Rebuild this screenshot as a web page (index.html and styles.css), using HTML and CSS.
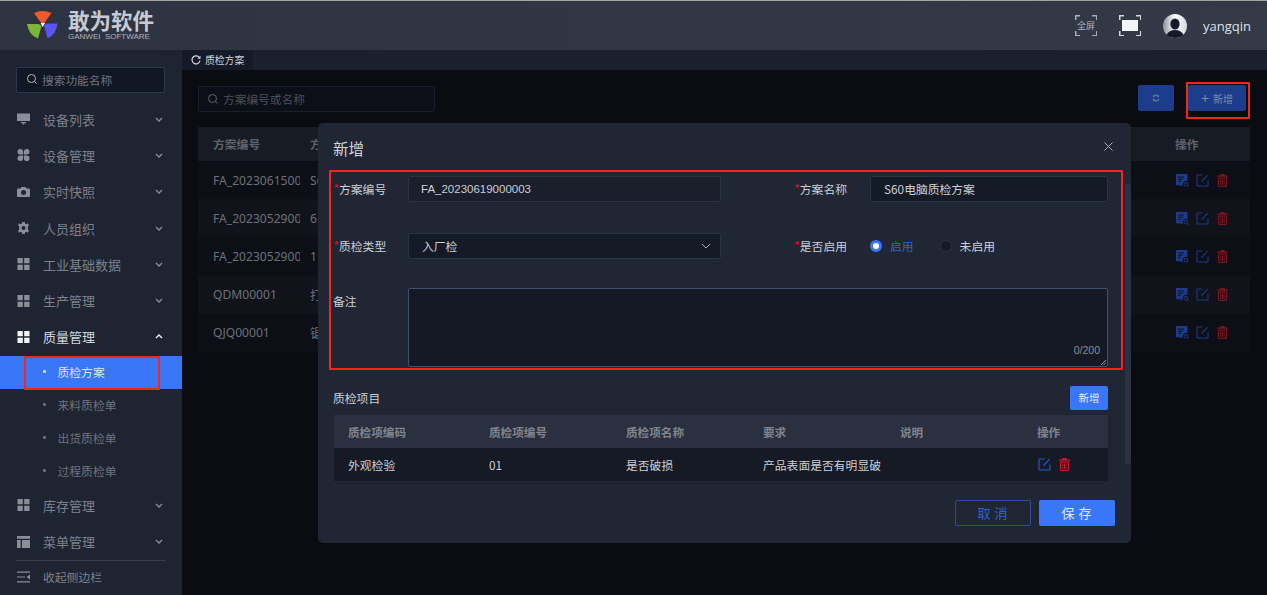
FILE: index.html
```html
<!DOCTYPE html>
<html lang="zh-CN">
<head>
<meta charset="utf-8">
<title>质检方案</title>
<link rel="stylesheet" href="styles.css">
</head>
<body>
<svg class="defs" width="0" height="0" aria-hidden="true">
  <symbol id="i-search" viewBox="0 0 12 12"><circle cx="5.5" cy="5.5" r="4" fill="none" stroke="currentColor" stroke-width="1"/><path d="M8.5 8.5L10.5 10.5" stroke="currentColor" stroke-width="1" fill="none"/></symbol>
  <symbol id="i-monitor" viewBox="0 0 13 12"><path d="M0 0.5H13V8H0Z M4 9H9V10.2H7.2V11.5H5.8V10.2H4Z" fill="currentColor"/></symbol>
  <symbol id="i-petal" viewBox="0 0 12 12"><path d="M0 3a2.8 2.8 0 0 1 5.6-.4V5.6H2.8A2.8 2.8 0 0 1 0 3ZM6.400 2.600A2.800 2.800 0 1 1 9.200 5.600H6.400ZM0 9a2.800 2.800 0 0 1 2.800-2.600H5.600V9.200A2.800 2.800 0 0 1 0 9ZM6.400 6.400H9.200A2.800 2.800 0 1 1 6.400 9.200Z" fill="currentColor"/></symbol>
  <symbol id="i-camera" viewBox="0 0 13 12"><path fill-rule="evenodd" d="M1 2.5H3.5L4.5 1H8.5L9.5 2.5H12Q13 2.5 13 3.5V10Q13 11 12 11H1Q0 11 0 10V3.5Q0 2.5 1 2.5ZM6.5 4A2.5 2.5 0 1 0 6.5 9A2.5 2.5 0 1 0 6.5 4Z" fill="currentColor"/></symbol>
  <symbol id="i-gear" viewBox="0 0 12 12"><path fill-rule="evenodd" d="M4.8 0H7.2L7.5 1.6 8.9 2.2 10.3 1.3 11.5 3.3 10.3 4.5V7.5L11.5 8.7 10.3 10.7 8.9 9.8 7.5 10.4 7.2 12H4.8L4.5 10.4 3.1 9.8 1.7 10.7.5 8.7 1.7 7.5V4.5L.5 3.3 1.7 1.3 3.1 2.2 4.5 1.6ZM6 4A2 2 0 1 0 6 8 2 2 0 1 0 6 4Z" fill="currentColor"/></symbol>
  <symbol id="i-grid" viewBox="0 0 12 12"><path d="M0 0H5.3V5.3H0ZM6.7 0H12V5.3H6.7ZM0 6.7H5.3V12H0ZM6.7 6.7H12V12H6.7Z" fill="currentColor"/></symbol>
  <symbol id="i-table" viewBox="0 0 12 11"><path d="M0 0H12V2.4H0ZM0 3.6H3.4V11H0ZM4.6 3.6H12V11H4.6Z" fill="currentColor"/></symbol>
  <symbol id="i-collapse" viewBox="0 0 13 11"><path d="M0 0H13V1.2H0ZM0 4.9H8V6.1H0ZM0 9.8H13V11H0ZM13 3V8L9.5 5.5Z" fill="currentColor"/></symbol>
  <symbol id="i-down" viewBox="0 0 8 5"><path d="M1 1L4 4 7 1" fill="none" stroke="currentColor" stroke-width="1.3"/></symbol>
  <symbol id="i-doc" viewBox="0 0 13 13"><path d="M0 0H11.500V7A3.500 3.500 0 0 0 7 11.800H4L2.800 10.800 1.400 11.800 0 10.800Z" fill="currentColor"/><path d="M2 3H8M2 5.200H7M2 7.400H5" stroke="#0a0d14" stroke-width=".9" fill="none"/><circle cx="10" cy="10.200" r="1.800" fill="none" stroke="currentColor" stroke-width="1"/><path d="M11.200 11.500L12.700 12.900" stroke="currentColor" stroke-width="1"/></symbol>
  <symbol id="i-edit" viewBox="0 0 13 13"><path d="M6.5 1H1.8Q1 1 1 1.8V11.2Q1 12 1.8 12H11.2Q12 12 12 11.2V6.5" fill="none" stroke="currentColor" stroke-width="1.1"/><path d="M5.5 7.5L11.8 1.2" stroke="currentColor" stroke-width="1.1" fill="none"/></symbol>
  <symbol id="i-trash" viewBox="0 0 12 13"><path fill-rule="evenodd" d="M4 0H8L8.6 1.4H11.6V2.8H.4V1.4H3.4ZM1.4 3.6H10.6V11.6Q10.6 13 9.2 13H2.8Q1.4 13 1.4 11.6ZM2.6 4.8V11.8H9.4V4.8ZM3.9 5.6H4.9V11H3.9ZM5.5 5.6H6.5V11H5.5ZM7.1 5.6H8.1V11H7.1Z" fill="currentColor"/></symbol>
</svg>

<div class="app">
  <header class="topbar">
    <div class="brand">
      <svg class="brand-mark" viewBox="0 0 32 30" width="32" height="30"><path d="M7 3Q15.500 -1 24.500 3L17 13.500H14.500Z" fill="#f0592b"/><path d="M0 13.500H11.800L14.500 15.500 11 28Q2 25 0 13.500Z" fill="#7cb53a" transform="translate(0 .5)"/><path d="M30.500 13.500H19.500L17 15.500 20.500 28.500Q29 25 30.500 13.500Z" fill="#5a55ee"/><path d="M13.500 13H18L15.700 17Z" fill="#fff"/></svg>
      <div class="brand-text">
        <div class="brand-name">敢为软件</div>
        <div class="brand-sub">GANWEI&nbsp; SOFTWARE</div>
      </div>
    </div>
    <div class="top-actions">
      <div class="fs-label"><span class="fs-text">全屏</span></div>
      <div class="fs-box"><span class="fs-fill"></span></div>
      <svg class="avatar" viewBox="0 0 24 24" width="24" height="24"><defs><linearGradient id="ag" x1="0" y1="0" x2="1" y2="0"><stop offset="0" stop-color="#8f939c"/><stop offset=".5" stop-color="#fff"/><stop offset="1" stop-color="#d5d7dc"/></linearGradient></defs><circle cx="12" cy="12" r="12" fill="url(#ag)"/><ellipse cx="12" cy="10" rx="4.600" ry="5.500" fill="#141a2b"/><path d="M3.500 21Q6 16 12 16 18 16 20.500 21 17 24 12 24 7 24 3.500 21Z" fill="#141a2b"/></svg>
      <span class="username">yangqin</span>
    </div>
  </header>

  <div class="layout">
    <aside class="sidebar">
      <div class="side-search"><svg class="ic12"><use href="#i-search"/></svg><span>搜索功能名称</span></div>
      <nav class="menu">
        <div class="menu-item"><svg class="menu-ic"><use href="#i-monitor"/></svg><span class="menu-text">设备列表</span><svg class="chev"><use href="#i-down"/></svg></div>
        <div class="menu-item"><svg class="menu-ic"><use href="#i-petal"/></svg><span class="menu-text">设备管理</span><svg class="chev"><use href="#i-down"/></svg></div>
        <div class="menu-item"><svg class="menu-ic"><use href="#i-camera"/></svg><span class="menu-text">实时快照</span><svg class="chev"><use href="#i-down"/></svg></div>
        <div class="menu-item"><svg class="menu-ic"><use href="#i-gear"/></svg><span class="menu-text">人员组织</span><svg class="chev"><use href="#i-down"/></svg></div>
        <div class="menu-item"><svg class="menu-ic"><use href="#i-grid"/></svg><span class="menu-text">工业基础数据</span><svg class="chev"><use href="#i-down"/></svg></div>
        <div class="menu-item"><svg class="menu-ic"><use href="#i-grid"/></svg><span class="menu-text">生产管理</span><svg class="chev"><use href="#i-down"/></svg></div>
        <div class="menu-item open"><svg class="menu-ic"><use href="#i-grid"/></svg><span class="menu-text">质量管理</span><svg class="chev up"><use href="#i-down"/></svg></div>
        <div class="sub-item active"><span class="dot"></span>质检方案<span class="mark-nav"></span></div>
        <div class="sub-item"><span class="dot"></span>来料质检单</div>
        <div class="sub-item"><span class="dot"></span>出货质检单</div>
        <div class="sub-item"><span class="dot"></span>过程质检单</div>
        <div class="menu-item"><svg class="menu-ic"><use href="#i-grid"/></svg><span class="menu-text">库存管理</span><svg class="chev"><use href="#i-down"/></svg></div>
        <div class="menu-item"><svg class="menu-ic"><use href="#i-table"/></svg><span class="menu-text">菜单管理</span><svg class="chev"><use href="#i-down"/></svg></div>
      </nav>
      <div class="side-foot"><svg class="menu-ic"><use href="#i-collapse"/></svg><span class="menu-text">收起侧边栏</span></div>
    </aside>

    <main class="main">
      <div class="tabs">
        <div class="tab"><svg class="tab-ic" viewBox="0 0 10 10" width="10" height="10"><path d="M8.600 3A4 4 0 1 0 9 5.500" fill="none" stroke="#d5d8de" stroke-width="1.200"/><path d="M9.500 .8V3.800H6.500Z" fill="#d5d8de"/></svg>质检方案</div>
      </div>
      <div class="content">
        <div class="toolbar">
          <div class="list-search"><svg class="ic12"><use href="#i-search"/></svg><span>方案编号或名称</span></div>
          <div class="tools">
            <div class="btn-refresh"><svg viewBox="0 0 10 10" width="8" height="8"><path d="M1.500 4A3.600 3.600 0 0 1 8 3M8.500 6A3.600 3.600 0 0 1 2 7" fill="none" stroke="#6f7f9f" stroke-width="1.300"/><path d="M8.800 1V3.600H6.400ZM1.200 9V6.400H3.600Z" fill="#6f7f9f"/></svg></div>
            <div class="btn-add"><span class="plus">+</span>新增<span class="mark-add"></span></div>
          </div>
        </div>
        <div class="list">
          <div class="list-row list-head"><span class="c1">方案编号</span><span class="c2">方案名称</span><span class="c3">操作</span></div>
          <div class="list-row"><span class="c1">FA_2023061500</span><span class="c2">S60电脑质检方案</span><span class="c3 ops"><svg class="op doc"><use href="#i-doc"/></svg><svg class="op ed"><use href="#i-edit"/></svg><svg class="op tr"><use href="#i-trash"/></svg></span></div>
          <div class="list-row alt"><span class="c1">FA_2023052900</span><span class="c2">6</span><span class="c3 ops"><svg class="op doc"><use href="#i-doc"/></svg><svg class="op ed"><use href="#i-edit"/></svg><svg class="op tr"><use href="#i-trash"/></svg></span></div>
          <div class="list-row"><span class="c1">FA_2023052900</span><span class="c2">1</span><span class="c3 ops"><svg class="op doc"><use href="#i-doc"/></svg><svg class="op ed"><use href="#i-edit"/></svg><svg class="op tr"><use href="#i-trash"/></svg></span></div>
          <div class="list-row alt"><span class="c1">QDM00001</span><span class="c2">打</span><span class="c3 ops"><svg class="op doc"><use href="#i-doc"/></svg><svg class="op ed"><use href="#i-edit"/></svg><svg class="op tr"><use href="#i-trash"/></svg></span></div>
          <div class="list-row"><span class="c1">QJQ00001</span><span class="c2">锯</span><span class="c3 ops"><svg class="op doc"><use href="#i-doc"/></svg><svg class="op ed"><use href="#i-edit"/></svg><svg class="op tr"><use href="#i-trash"/></svg></span></div>
        </div>
      </div>
    </main>
  </div>

  <section class="modal">
    <div class="modal-head"><span class="modal-title">新增</span><svg class="close" viewBox="0 0 9 9" width="9" height="9"><path d="M.5.5L8.500 8.500M8.500.5L.5 8.500" stroke="#aab0bb" stroke-width="1"/></svg></div>
    <div class="form">
      <label class="f-label req"><i>*</i>方案编号</label>
      <div class="field mono">FA_20230619000003</div>
      <label class="f-label right req"><i>*</i>方案名称</label>
      <div class="field">S60电脑质检方案</div>

      <label class="f-label req"><i>*</i>质检类型</label>
      <div class="field select">入厂检<svg class="sel-ic" viewBox="0 0 10 6" width="10" height="6"><path d="M1 1L5 5 9 1" fill="none" stroke="#aab0bb" stroke-width="1"/></svg></div>
      <label class="f-label right req"><i>*</i>是否启用</label>
      <div class="radios">
        <span class="radio on"></span><span class="radio-text on-text">启用</span>
        <span class="radio"></span><span class="radio-text">未启用</span>
      </div>

      <label class="f-label top">备注</label>
      <div class="textarea"><span class="count">0/200</span><svg class="grip" viewBox="0 0 6 6" width="6" height="6"><path d="M1 6L6 1M3.500 6L6 3.500" stroke="#b5bac4" stroke-width=".8"/></svg></div>
    </div>

    <div class="section">
      <div class="section-head"><span class="section-title">质检项目</span><div class="btn-mini">新增</div></div>
      <div class="items">
        <div class="items-row items-hd"><span>质检项编码</span><span>质检项编号</span><span>质检项名称</span><span>要求</span><span>说明</span><span>操作</span></div>
        <div class="items-row"><span>外观检验</span><span>01</span><span>是否破损</span><span>产品表面是否有明显破</span><span></span><span class="item-ops"><svg class="op2 e2"><use href="#i-edit"/></svg><svg class="op2 t2"><use href="#i-trash"/></svg></span></div>
      </div>
    </div>

    <div class="modal-foot">
      <div class="btn-cancel">取消</div>
      <div class="btn-save">保存</div>
    </div>
    <span class="scrollbar"></span>
  </section>
</div>
</body>
</html>
```

FILE: styles.css
```css
* { box-sizing: border-box; }
html, body { margin: 0; padding: 0; height: 100%; overflow: hidden; }
body {
  font-family: "Liberation Sans", "Noto Sans CJK SC", sans-serif;
  font-size: 12px;
  color: #c9cdd4;
  background: #0a0c12;
}
.defs { position: absolute; }

.app { position: relative; display: flex; flex-direction: column; height: 595px; width: 1267px; overflow: hidden; }

/* top bar */
.topbar {
  height: 50px; flex: none;
  display: flex; align-items: center; justify-content: space-between;
  background: linear-gradient(90deg, #2d3341, #343948);
  border-top: 1px solid #a3a3a3;
  padding: 0 14px 0 27px;
}
.brand { display: flex; align-items: center; gap: 9px; margin-top: -1px; }
.brand-mark { display: block; }
.brand-name { font-family: "Noto Sans CJK SC", sans-serif; font-weight: 700; font-size: 21.5px; line-height: 24px; color: #c6cad2; margin-top: -1px; }
.brand-sub { font-size: 8px; line-height: 9px; color: #aeb3bc; white-space: nowrap; }
.top-actions { display: flex; align-items: center; }
.fs-label, .fs-box {
  position: relative; width: 22px; height: 21px;
  background:
    linear-gradient(#d5d8de,#d5d8de) 0 0/5px 1.500px no-repeat,
    linear-gradient(#d5d8de,#d5d8de) 0 0/1.500px 5px no-repeat,
    linear-gradient(#d5d8de,#d5d8de) 100% 0/5px 1.500px no-repeat,
    linear-gradient(#d5d8de,#d5d8de) 100% 0/1.500px 5px no-repeat,
    linear-gradient(#d5d8de,#d5d8de) 0 100%/5px 1.500px no-repeat,
    linear-gradient(#d5d8de,#d5d8de) 0 100%/1.500px 5px no-repeat,
    linear-gradient(#d5d8de,#d5d8de) 100% 100%/5px 1.500px no-repeat,
    linear-gradient(#d5d8de,#d5d8de) 100% 100%/1.500px 5px no-repeat;
}
.fs-label { display: flex; align-items: center; justify-content: center; opacity: .75; margin-right: 22px; }
.fs-text { font-family: "Noto Sans CJK SC", sans-serif; font-size: 9px; line-height: 10px; color: #d5d8de; white-space: nowrap; }
.fs-box { display: flex; align-items: center; justify-content: center; margin-right: 22px; }
.fs-fill { width: 16px; height: 11px; background: #f4f5f7; }
.avatar { display: block; margin-right: 16px; }
.username { font-family: "Open Sans", sans-serif; font-size: 13px; color: #dfe2e7; width: 50px; white-space: nowrap; }

.layout { flex: 1; display: flex; min-height: 0; }

/* sidebar */
.sidebar { width: 182px; flex: none; background: #1f2432; padding: 17px 16px 0; color: #7c808a; display: flex; flex-direction: column; }
.side-search {
  height: 26px; display: flex; align-items: center; gap: 4px; padding: 0 0 2px 9px; width: 149px;
  background: #111725; border: 1px solid #2f3850; border-radius: 2px; color: #6f7480; font-family: "Noto Sans CJK SC", sans-serif; font-size: 11.700px; flex: none;
}
.side-search .ic12 { color: #b3b7bf; }
.ic12 { width: 12px; height: 12px; flex: none; }
.menu { margin: 9px -16px 0; }
.menu-item {
  height: 36.300px; display: flex; align-items: center; padding: 0 19px 2px 17px;
  font-family: "Noto Sans CJK SC", sans-serif; font-size: 13px; color: #7d818b;
}
.menu-ic { width: 13px; height: 12px; flex: none; color: #8b8f98; margin-right: 13px; }
.menu-text { flex: 1; white-space: nowrap; }
.chev { width: 8px; height: 5px; flex: none; color: #8b8f98; }
.chev.up { transform: rotate(180deg); color: #eef0f3; }
.open { color: #d4d7dc; }
.open .menu-ic { color: #f2f3f5; }
.sub-item {
  position: relative; height: 33px; display: flex; align-items: center; padding: 0 0 2px 43px;
  font-family: "Noto Sans CJK SC", sans-serif; font-size: 11.800px; color: #6f737d;
}
.dot { width: 2.500px; height: 2.500px; background: currentColor; border-radius: 50%; margin-right: 12px; }
.active { background: #3a76f8; color: #dde5f5; }
.mark-nav { position: absolute; left: 24px; top: 0; width: 136px; height: 34px; border: 2px solid #f3251d; }
.side-foot { border-top: 1px solid #3a3f4c; margin: -1px 0 0; height: 36px; display: flex; align-items: center; font-family: "Noto Sans CJK SC", sans-serif; font-size: 11.800px; color: #7d818b; padding: 0 0 2px 1px; }
.side-foot .menu-ic { margin-right: 13px; }

/* main */
.main { flex: 1; min-width: 0; display: flex; flex-direction: column; background: #0a0c12; }
.tabs { height: 20px; flex: none; background: #1a202d; }
.tab { width: 71px; height: 20px; display: flex; align-items: center; padding-left: 9px; gap: 4px; background: #141a27; font-family: "Noto Sans CJK SC", sans-serif; font-size: 9.800px; color: #d0d3d9; white-space: nowrap; }
.tab-ic { flex: none; }
.content { padding: 15px 17px 0 16px; }
.toolbar { display: flex; justify-content: space-between; height: 42px; }
.list-search {
  width: 237px; height: 26px; margin-top: 1px; display: flex; align-items: center; gap: 4px; padding: 0 0 1px 8px;
  border: 1px solid #181d2a; border-radius: 2px; background: #0c0f17; color: #4b4f59; font-family: "Noto Sans CJK SC", sans-serif; font-size: 11.700px;
}
.list-search .ic12 { color: #62666f; }
.tools { display: flex; gap: 14px; padding-right: 4px; }
.btn-refresh { width: 36px; height: 26px; background: #1c3c8c; border-radius: 2px; display: flex; align-items: center; justify-content: center; }
.btn-add { position: relative; width: 58px; height: 26px; background: #1c3c8c; border-radius: 2px; display: flex; align-items: center; justify-content: center; gap: 4px; color: #7f8ca8; font-family: "Noto Sans CJK SC", sans-serif; font-size: 10px; }
.plus { font-family: "Liberation Sans", sans-serif; font-size: 14px; font-weight: 400; line-height: 14px; }
.mark-add { position: absolute; left: -2px; top: -3px; width: 64px; height: 37px; border: 2px solid #f3251d; border-radius: 1px; }
.list { width: 1052px; font-family: "Noto Sans", "Noto Sans CJK SC", sans-serif; font-size: 12.100px; color: #6d7078; }
.list-row { height: 38.200px; display: grid; grid-template-columns: 112px 1fr 75px; align-items: center; background: #0c0f16; }
.list-row.alt { background: #10131a; }
.list-head { height: 34px; padding-bottom: 2px; background: #171b23; font-family: "Noto Sans CJK SC", sans-serif; font-weight: 700; font-size: 11.800px; color: #5f636b; }
.list-row span { white-space: nowrap; overflow: hidden; }
.c1 { padding-left: 15px; margin-right: 10px; }
.ops { display: flex; align-items: center; gap: 7px; padding-left: 1px; }
.op { width: 13px; height: 13px; flex: none; }
.doc, .ed { color: #1c3b8a; }
.tr { color: #7d1420; }

/* modal */
.modal {
  position: absolute; left: 318px; top: 123px; width: 813px; height: 420px;
  background: #202634; border-radius: 5px; display: flex; flex-direction: column;
  font-family: "Noto Sans CJK SC", sans-serif; font-size: 11.800px; color: #cdd0d6;
}
.modal-head { height: 47px; flex: none; display: flex; justify-content: space-between; align-items: flex-start; padding: 0 18px 0 15px; }
.modal-title { font-size: 15.500px; line-height: 20px; margin-top: 15px; color: #d2d5db; }
.close { margin-top: 19px; }
.form {
  margin: 0 8px 0 11px; height: 200px; flex: none; border: 2px solid #f3251d; border-radius: 1px;
  padding: 4px 0 1px 2px;
  display: grid; grid-template-columns: 75px 313px 149px 238px; grid-template-rows: 26px 26px 79px; row-gap: 31px;
}
.form > :nth-child(n+9) { margin-top: -2px; margin-bottom: 2px; }
.f-label { display: flex; align-items: center; white-space: nowrap; padding-bottom: 2px; }
.f-label i { font-style: normal; color: #e0161c; width: 5px; flex: none; font-family: "Liberation Sans", sans-serif; }
.f-label.req { padding-left: 1px; }
.f-label.right { justify-content: flex-end; padding-right: 23px; padding-left: 0; }
.f-label.top { align-items: flex-start; padding-top: 4px; line-height: 18px; }
.field {
  display: flex; align-items: center; padding: 0 0 2px 13px; background: #151a27; border: 1px solid #2b3242; border-radius: 2px; white-space: nowrap; color: #cdd0d6;
}
.mono { font-family: "Liberation Sans", sans-serif; font-size: 11.500px; background: #1a1f2b; padding: 0 0 1px 12px; }
.select { position: relative; justify-content: space-between; padding-right: 9px; }
.sel-ic { flex: none; margin-top: 2px; }
.radios { display: flex; align-items: center; padding-bottom: 2px; }
.radio { width: 12px; height: 12px; border-radius: 50%; background: #151a27; border: 1px solid #2b3242; flex: none; margin-top: 2px; }
.radio.on { background: #fff; border: 3px solid #3a76f8; }
.radio-text { margin-left: 8px; margin-right: 26px; }
.on-text { color: #2f62d8; }
.textarea { grid-column: 2 / 5; position: relative; background: #141925; border: 1px solid #41506e; border-radius: 2px; }
.count { position: absolute; right: 7px; bottom: 10px; font-family: "Liberation Sans", sans-serif; font-size: 10.500px; line-height: 12px; color: #8a8e97; }
.grip { position: absolute; right: 1px; bottom: 1px; }
.section { padding: 16px 23px 0 15px; flex: none; }
.section-head { display: flex; justify-content: space-between; align-items: center; height: 24px; }
.section-title { padding-bottom: 2px; }
.btn-mini { width: 38px; height: 24px; background: #3a76f8; border-radius: 2px; display: flex; align-items: center; justify-content: center; font-size: 10.500px; color: #e5ebf7; padding-bottom: 1px; }
.items { margin: 5px 0 0 1px; }
.items-row { display: grid; grid-template-columns: 141px 137px 137px 137px 137px 85px; height: 33px; align-items: center; background: #151a25; }
.items-row > span { padding-left: 14px; white-space: nowrap; overflow: hidden; }
.items-hd { background: #2a303f; font-weight: 700; color: #80848e; font-size: 11.600px; padding-top: 1px; }
.item-ops { display: flex; align-items: center; gap: 7px; padding-left: 15px !important; }
.op2 { width: 13px; height: 13px; flex: none; }
.e2 { color: #2a5bd0; }
.t2 { color: #c41a2b; }
.modal-foot { display: flex; justify-content: flex-end; gap: 8px; padding: 19px 16px 0 0; }
.btn-cancel, .btn-save { width: 76px; height: 26px; border-radius: 2px; display: flex; align-items: center; justify-content: center; letter-spacing: 4px; font-size: 13px; padding-left: 3px; padding-bottom: 1px; }
.btn-cancel { border: 1px solid #2c4d9c; color: #2f62d8; }
.btn-save { background: #3a76f8; color: #dfe7f6; }
.scrollbar { position: absolute; right: 0; top: 60px; width: 6px; height: 282px; background: #2b3140; border-radius: 3px; }
```
